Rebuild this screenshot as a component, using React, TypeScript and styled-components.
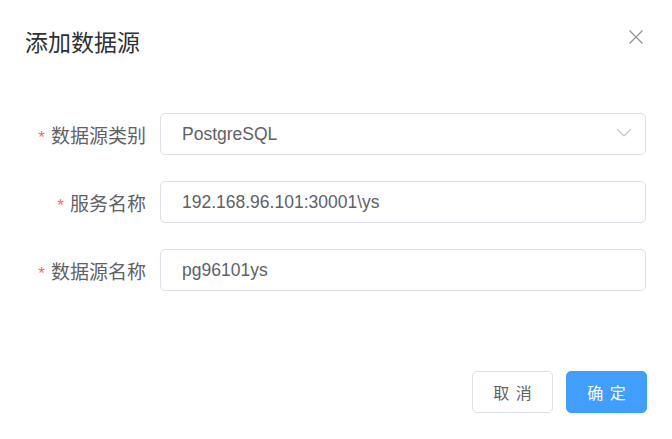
import React from "react";
import styled, { createGlobalStyle } from "styled-components";

const Global = createGlobalStyle`
  html, body { margin: 0; padding: 0; background: #fff; }
  body { font-family: "Liberation Sans", "Noto Sans CJK SC", sans-serif; }
  * { box-sizing: border-box; }
`;

const Dialog = styled.div`
  width: 672px;
  height: 439px;
  background: #fff;
  display: flex;
  flex-direction: column;
`;

const Header = styled.div`
  height: 113px;
  padding: 25px 28px 0 25px;
  display: flex;
  justify-content: space-between;
  align-items: flex-start;
`;

const Title = styled.div`
  font-family: "Noto Sans CJK SC", sans-serif;
  font-size: 23px;
  line-height: 32px;
  color: #303133;
`;

const CloseBtn = styled.button`
  border: none;
  background: none;
  padding: 0;
  margin-top: 4px;
  width: 16px;
  height: 16px;
  cursor: pointer;
  display: flex;
`;

const Form = styled.div`
  display: flex;
  flex-direction: column;
  gap: 26px;
  padding-right: 26px;
`;

const Row = styled.div`
  display: flex;
  align-items: center;
  height: 42px;
`;

const Label = styled.label`
  width: 160px;
  padding-right: 14px;
  text-align: right;
  font-family: "Noto Sans CJK SC", sans-serif;
  font-size: 19px;
  color: #606266;
  white-space: nowrap;
`;

const Star = styled.span`
  color: #f56c6c;
  font-family: "Liberation Sans", sans-serif;
  font-size: 17px;
  margin-right: 6px;
`;

const Field = styled.div`
  flex: 1;
  position: relative;
  height: 42px;
`;

const Input = styled.input`
  width: 100%;
  height: 42px;
  border: 1px solid #dcdfe6;
  border-radius: 5px;
  padding: 0 40px 0 21px;
  font-family: "Liberation Sans", "Noto Sans CJK SC", sans-serif;
  font-size: 17.5px;
  color: #606266;
  outline: none;
  background: #fff;
`;

const Arrow = styled.span`
  position: absolute;
  right: 14px;
  top: 14px;
  display: flex;
`;

const Footer = styled.div`
  margin-top: auto;
  padding: 0 25px 26px 0;
  display: flex;
  justify-content: flex-end;
  gap: 13px;
`;

const Button = styled.button<{ $primary?: boolean }>`
  width: 81px;
  height: 42px;
  border-radius: 5px;
  border: 1px solid ${(p) => (p.$primary ? "#409eff" : "#dcdfe6")};
  background: ${(p) => (p.$primary ? "#409eff" : "#fff")};
  color: ${(p) => (p.$primary ? "#fff" : "#606266")};
  font-family: "Noto Sans CJK SC", sans-serif;
  font-size: 16px;
  letter-spacing: 1.5px;
  padding: 0 0 0 1.5px;
  cursor: pointer;
`;

const rows = [
  { label: "数据源类别", value: "PostgreSQL", select: true },
  { label: "服务名称", value: "192.168.96.101:30001\\ys" },
  { label: "数据源名称", value: "pg96101ys" },
];

export default function App() {
  return (
    <>
      <Global />
      <Dialog>
        <Header>
          <Title>添加数据源</Title>
          <CloseBtn aria-label="close">
            <svg width="16" height="16" viewBox="0 0 16 16">
              <path d="M1.5 1.5 L14.5 14.5 M14.5 1.5 L1.5 14.5" stroke="#909399" strokeWidth="1.3" fill="none" />
            </svg>
          </CloseBtn>
        </Header>
        <Form>
          {rows.map((r) => (
            <Row key={r.label}>
              <Label>
                <Star>*</Star>
                {r.label}
              </Label>
              <Field>
                <Input readOnly value={r.value} />
                {r.select && (
                  <Arrow>
                    <svg width="16" height="12" viewBox="0 0 16 12">
                      <path d="M1 2 L8 9 L15 2" stroke="#c0c4cc" strokeWidth="1.2" fill="none" />
                    </svg>
                  </Arrow>
                )}
              </Field>
            </Row>
          ))}
        </Form>
        <Footer>
          <Button>取 消</Button>
          <Button $primary>确 定</Button>
        </Footer>
      </Dialog>
    </>
  );
}
